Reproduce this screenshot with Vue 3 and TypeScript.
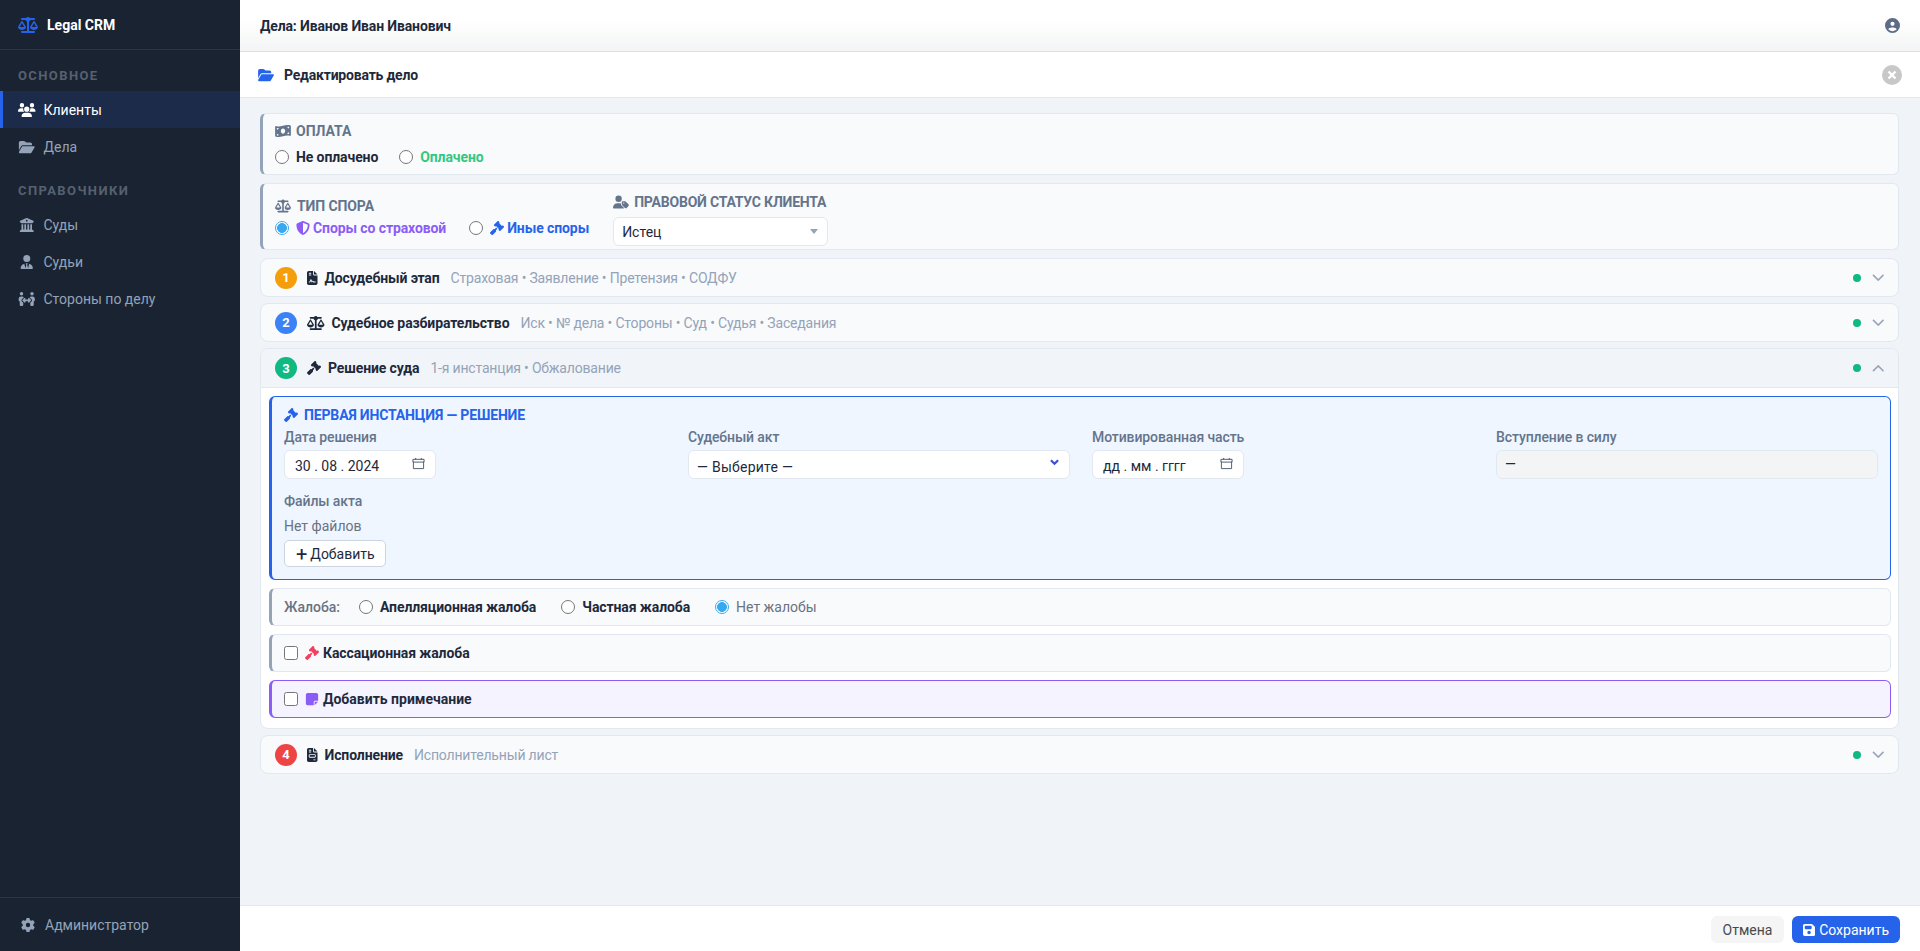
<template>
  <div class="app">
    <aside class="sidebar">
      <div class="brand">
        <svg class="brand-icon" viewBox="0 0 640 512"><path :d="icons.scale" /></svg>
        <span>Legal CRM</span>
      </div>
      <div class="nav-title">ОСНОВНОЕ</div>
      <a class="nav-item active">
        <svg viewBox="0 0 640 512"><path :d="icons.users" /></svg>Клиенты
      </a>
      <a class="nav-item">
        <svg viewBox="0 0 576 512"><path :d="icons.folder" /></svg>Дела
      </a>
      <div class="nav-title">СПРАВОЧНИКИ</div>
      <a class="nav-item">
        <svg viewBox="0 0 512 512"><path :d="icons.landmark" /></svg>Суды
      </a>
      <a class="nav-item">
        <svg viewBox="0 0 448 512"><path :d="icons.userTie" /></svg>Судьи
      </a>
      <a class="nav-item">
        <svg viewBox="0 0 640 512"><path :d="icons.peopleArrows" /></svg>Стороны по делу
      </a>
      <div class="side-foot">
        <svg viewBox="0 0 512 512"><path :d="icons.gear" /></svg>Администратор
      </div>
    </aside>

    <main class="main">
      <header class="topbar">
        <span>Дела: Иванов Иван Иванович</span>
        <svg class="user-icon" viewBox="0 0 512 512"><path :d="icons.circleUser" /></svg>
      </header>

      <div class="modal-head">
        <svg class="modal-icon" viewBox="0 0 576 512"><path :d="icons.folder" /></svg>
        <span class="modal-title">Редактировать дело</span>
        <button class="close-btn" type="button">
          <svg viewBox="0 0 12 12"><path d="M2.5 2.5l7 7M9.5 2.5l-7 7" /></svg>
        </button>
      </div>

      <div class="content">
        <section class="box">
          <div class="box-title">
            <svg viewBox="0 0 576 512"><path :d="icons.money" /></svg>ОПЛАТА
          </div>
          <div class="radios">
            <label class="radio"><input type="radio" name="pay" /><b>Не оплачено</b></label>
            <label class="radio"><input type="radio" name="pay" /><b class="green">Оплачено</b></label>
          </div>
        </section>

        <section class="box dispute">
          <div class="kind">
            <div class="box-title">
              <svg viewBox="0 0 640 512"><path :d="icons.scale" /></svg>ТИП СПОРА
            </div>
            <div class="radios">
              <label class="radio">
                <input type="radio" name="kind" checked />
                <b class="purple"><svg viewBox="0 0 512 512"><path :d="icons.shield" /></svg>Споры со страховой</b>
              </label>
              <label class="radio">
                <input type="radio" name="kind" />
                <b class="blue"><svg viewBox="0 0 512 512"><path :d="icons.gavel" /></svg>Иные споры</b>
              </label>
            </div>
          </div>
          <div class="status">
            <div class="box-title">
              <svg viewBox="0 0 640 512"><path :d="icons.userTag" /></svg>ПРАВОВОЙ СТАТУС КЛИЕНТА
            </div>
            <div class="select-wrap status-select">
              <select>
                <option>Истец</option>
              </select>
              <i class="caret"></i>
            </div>
          </div>
        </section>

        <div class="stages">
          <section v-for="stage in stages" :key="stage.num" class="stage" :class="{ open: stage.open }">
            <div class="stage-head">
              <span class="num" :style="{ background: stage.color }">{{ stage.num }}</span>
              <svg class="stage-icon" :viewBox="stage.box"><path :d="stage.icon" /></svg>
              <b class="stage-name">{{ stage.name }}</b>
              <span class="stage-sub">{{ stage.sub }}</span>
              <span class="dot"></span>
              <svg class="chevron" viewBox="0 0 14 8"><path :d="stage.open ? 'M1 7l6-6 6 6' : 'M1 1l6 6 6-6'" /></svg>
            </div>

            <div v-if="stage.open" class="stage-body">
              <div class="first">
                <div class="first-title">
                  <svg viewBox="0 0 512 512"><path :d="icons.gavel" /></svg>ПЕРВАЯ ИНСТАНЦИЯ — РЕШЕНИЕ
                </div>
                <div class="fields">
                  <div class="field">
                    <label>Дата решения</label>
                    <div class="date">
                      <span class="date-value">30 . 08 . 2024</span>
                      <svg viewBox="0 0 14 14"><path :d="calendar" /></svg>
                    </div>
                  </div>
                  <div class="field">
                    <label>Судебный акт</label>
                    <div class="select-wrap act-select">
                      <select>
                        <option>— Выберите —</option>
                      </select>
                      <svg class="act-arrow" viewBox="0 0 10 8"><path d="M1 2l4 4 4-4" /></svg>
                    </div>
                  </div>
                  <div class="field">
                    <label>Мотивированная часть</label>
                    <div class="date">
                      <span class="date-value">дд . мм . гггг</span>
                      <svg viewBox="0 0 14 14"><path :d="calendar" /></svg>
                    </div>
                  </div>
                  <div class="field">
                    <label>Вступление в силу</label>
                    <div class="readonly">—</div>
                  </div>
                </div>
                <div class="files">
                  <label>Файлы акта</label>
                  <div class="no-files">Нет файлов</div>
                  <button class="add-btn" type="button"><span class="plus">+</span>Добавить</button>
                </div>
              </div>

              <div class="row complaint">
                <span class="complaint-label">Жалоба:</span>
                <label class="radio"><input type="radio" name="complaint" /><b>Апелляционная жалоба</b></label>
                <label class="radio"><input type="radio" name="complaint" /><b>Частная жалоба</b></label>
                <label class="radio"><input type="radio" name="complaint" checked /><span class="muted">Нет жалобы</span></label>
              </div>

              <label class="row">
                <input type="checkbox" />
                <svg class="row-icon pink" viewBox="0 0 512 512"><path :d="icons.gavel" /></svg>
                <b>Кассационная жалоба</b>
              </label>

              <label class="row note">
                <input type="checkbox" />
                <svg class="row-icon violet" viewBox="0 0 448 512"><path :d="icons.note" /></svg>
                <b>Добавить примечание</b>
              </label>
            </div>
          </section>
        </div>
      </div>

      <footer class="footer">
        <button class="cancel" type="button">Отмена</button>
        <button class="save" type="button">
          <svg viewBox="0 0 448 512"><path :d="icons.floppy" /></svg>Сохранить
        </button>
      </footer>
    </main>
  </div>
</template>

<script setup lang="ts">
interface Stage {
  num: number;
  name: string;
  sub: string;
  color: string;
  icon: string;
  box: string;
  open: boolean;
}

const calendar = 'M1 2.5h12v3H1zM1.5 5v7.5h11V5M4 1v2M10 1v2';

const icons = {
  scale: 'M384 32H512c17.7 0 32 14.3 32 32s-14.3 32-32 32H398.4c-5.2 25.8-22.9 47.1-46.4 57.3V448H512c17.7 0 32 14.3 32 32s-14.3 32-32 32H320 128c-17.7 0-32-14.3-32-32s14.3-32 32-32H288V153.3c-23.5-10.3-41.2-31.6-46.4-57.3H128c-17.7 0-32-14.3-32-32s14.3-32 32-32H256c14.6-19.4 37.8-32 64-32s49.4 12.6 64 32zm55.6 288H584.4L512 195.8 439.6 320zM512 416c-62.9 0-115.2-34-126-78.9c-2.6-11 1-22.3 6.7-32.1l95.2-163.2c5-8.6 14.2-13.8 24.1-13.8s19.1 5.3 24.1 13.8l95.2 163.2c5.7 9.8 9.3 21.1 6.7 32.1C627.2 382 574.9 416 512 416zM126.8 195.8L54.4 320H199.3L126.8 195.8zM.9 337.1c-2.6-11 1-22.3 6.7-32.1l95.2-163.2c5-8.6 14.2-13.8 24.1-13.8s19.1 5.3 24.1 13.8l95.2 163.2c5.7 9.8 9.3 21.1 6.7 32.1C242 382 189.7 416 126.8 416S11.7 382 .9 337.1z',
  users: 'M144 0a80 80 0 1 1 0 160A80 80 0 1 1 144 0zM512 0a80 80 0 1 1 0 160A80 80 0 1 1 512 0zM0 298.7C0 239.8 47.8 192 106.7 192h42.7c15.9 0 31 3.5 44.6 9.7c-1.3 7.2-1.9 14.7-1.9 22.3c0 38.2 16.8 72.5 43.3 96c-.2 0-.4 0-.7 0H21.3C9.6 320 0 310.4 0 298.7zM405.3 320c-.2 0-.4 0-.7 0c26.6-23.5 43.3-57.8 43.3-96c0-7.6-.7-15-1.9-22.3c13.6-6.3 28.7-9.7 44.6-9.7h42.7C592.2 192 640 239.8 640 298.7c0 11.8-9.6 21.3-21.3 21.3H405.3zM224 224a96 96 0 1 1 192 0 96 96 0 1 1 -192 0zM128 485.3C128 411.7 187.7 352 261.3 352H378.7C452.3 352 512 411.7 512 485.3c0 14.7-11.9 26.7-26.7 26.7H154.7c-14.7 0-26.7-11.9-26.7-26.7z',
  folder: 'M88.7 223.8L0 375.8V96C0 60.7 28.7 32 64 32H181.5c17 0 33.3 6.7 45.3 18.7l26.5 26.5c12 12 28.3 18.7 45.3 18.7H416c35.3 0 64 28.7 64 64v32H144c-22.8 0-43.8 12.1-55.3 31.8zm27.6 16.1C122.1 230 132.6 224 144 224H544c11.5 0 22 6.1 27.7 16.1s5.7 22.2-.1 32.1l-112 192C453.9 474 443.4 480 432 480H32c-11.5 0-22-6.1-27.7-16.1s-5.7-22.2 .1-32.1l112-192z',
  landmark: 'M243.4 2.6l-224 96c-14 6-21.8 21-18.7 35.8S16.8 160 32 160v8c0 13.3 10.7 24 24 24H456c13.3 0 24-10.7 24-24v-8c15.2 0 28.3-10.7 31.3-25.6s-4.8-29.9-18.7-35.8l-224-96c-8-3.4-17.2-3.4-25.2 0zM128 224H64V420.3c-.6 .3-1.2 .7-1.8 1.1l-48 32c-11.7 7.8-17 22.4-12.9 35.9S17.9 512 32 512H480c14.1 0 26.5-9.2 30.6-22.7s-1.1-28.1-12.9-35.9l-48-32c-.6-.4-1.2-.7-1.8-1.1V224H384V416H344V224H280V416H232V224H168V416H128V224zM256 64a32 32 0 1 1 0 64 32 32 0 1 1 0-64z',
  userTie: 'M96 128a128 128 0 1 0 256 0A128 128 0 1 0 96 128zm94.5 200.2l18.6 31L175.8 483.1l-36-146.9c-2-8.1-9.8-13.4-17.9-11.3C51.9 342.4 0 405.8 0 481.3c0 17 13.8 30.7 30.7 30.7H162.5c0 0 0 0 .1 0H168 280h5.5c0 0 0 0 .1 0H417.3c17 0 30.7-13.8 30.7-30.7c0-75.5-51.9-138.9-121.9-156.4c-8.1-2-15.9 3.3-17.9 11.3l-36 146.9L238.9 359.2l18.6-31c6.4-10.7-1.3-24.2-13.7-24.2H224 204.3c-12.4 0-20.1 13.6-13.7 24.2z',
  peopleArrows: 'M64 64a64 64 0 1 1 128 0A64 64 0 1 1 64 64zM25.9 233.4C29.3 191.9 64 160 105.6 160h44.8c27 0 51 13.4 65.5 34.1c-2.7 1.9-5.2 4-7.5 6.3l-64 64c-21.9 21.9-21.9 57.3 0 79.2L192 391.2V464c0 26.5-21.5 48-48 48H112c-26.5 0-48-21.5-48-48V348.3c-26.5-9.5-44.7-35.8-42.2-65.6l4.1-49.3zM448 64a64 64 0 1 1 128 0A64 64 0 1 1 448 64zM431.6 200.4c-2.3-2.3-4.9-4.4-7.5-6.3c14.5-20.7 38.6-34.1 65.5-34.1h44.8c41.6 0 76.3 31.9 79.7 73.4l4.1 49.3c2.5 29.8-15.7 56.1-42.2 65.6V464c0 26.5-21.5 48-48 48H496c-26.5 0-48-21.5-48-48V391.2l47.6-47.6c21.9-21.9 21.9-57.3 0-79.2l-64-64zM272 240v32h96V240c0-9.7 5.8-18.5 14.8-22.2s19.3-1.7 26.2 5.2l64 64c9.4 9.4 9.4 24.6 0 33.9l-64 64c-6.9 6.9-17.2 8.9-26.2 5.2s-14.8-12.5-14.8-22.2V336H272v32c0 9.7-5.8 18.5-14.8 22.2s-19.3 1.7-26.2-5.2l-64-64c-9.4-9.4-9.4-24.6 0-33.9l64-64c6.9-6.9 17.2-8.9 26.2-5.2s14.8 12.5 14.8 22.2z',
  gear: 'M495.9 166.6c3.2 8.7 .5 18.4-6.4 24.6l-43.3 39.4c1.1 8.3 1.7 16.8 1.7 25.4s-.6 17.1-1.7 25.4l43.3 39.4c6.9 6.2 9.6 15.9 6.4 24.6c-4.4 11.9-9.7 23.3-15.8 34.3l-4.7 8.1c-6.6 11-14 21.4-22.1 31.2c-5.9 7.2-15.7 9.6-24.5 6.8l-55.7-17.7c-13.4 10.3-28.2 18.9-44 25.4l-12.5 57.1c-2 9.1-9 16.3-18.2 17.8c-13.8 2.3-28 3.5-42.5 3.5s-28.7-1.2-42.5-3.5c-9.2-1.5-16.2-8.7-18.2-17.8l-12.5-57.1c-15.8-6.5-30.6-15.1-44-25.4L83.1 425.9c-8.8 2.8-18.6 .3-24.5-6.8c-8.1-9.8-15.5-20.2-22.1-31.2l-4.7-8.1c-6.1-11-11.4-22.4-15.8-34.3c-3.2-8.7-.5-18.4 6.4-24.6l43.3-39.4C64.6 273.1 64 264.6 64 256s.6-17.1 1.7-25.4L22.4 191.2c-6.9-6.2-9.6-15.9-6.4-24.6c4.4-11.9 9.7-23.3 15.8-34.3l4.7-8.1c6.6-11 14-21.4 22.1-31.2c5.9-7.2 15.7-9.6 24.5-6.8l55.7 17.7c13.4-10.3 28.2-18.9 44-25.4l12.5-57.1c2-9.1 9-16.3 18.2-17.8C227.3 1.2 241.5 0 256 0s28.7 1.2 42.5 3.5c9.2 1.5 16.2 8.7 18.2 17.8l12.5 57.1c15.8 6.5 30.6 15.1 44 25.4l55.7-17.7c8.8-2.8 18.6-.3 24.5 6.8c8.1 9.8 15.5 20.2 22.1 31.2l4.7 8.1c6.1 11 11.4 22.4 15.8 34.3zM256 336a80 80 0 1 0 0-160 80 80 0 1 0 0 160z',
  circleUser: 'M399 384.2C376.9 345.8 335.4 320 288 320H224c-47.4 0-88.9 25.8-111 64.2c35.2 39.2 86.2 63.8 143 63.8s107.8-24.7 143-63.8zM0 256a256 256 0 1 1 512 0A256 256 0 1 1 0 256zm256 16a72 72 0 1 0 0-144 72 72 0 1 0 0 144z',
  money: 'M0 112.5V422.3c0 18 10.1 35 27 41.3c87 32.5 174 10.3 261-11.9c79.8-20.3 159.6-40.7 239.3-18.9c23 6.3 48.7-9.5 48.7-33.4V89.7c0-18-10.1-35-27-41.3C462 15.9 375 38.1 288 60.3C208.2 80.6 128.4 100.9 48.7 79.1C25.6 72.8 0 88.6 0 112.5zM288 352c-44.2 0-80-43-80-96s35.8-96 80-96s80 43 80 96s-35.8 96-80 96zM64 352c35.3 0 64 28.7 64 64H64V352zm64-208c0 35.3-28.7 64-64 64V144h64zM512 304v64H448c0-35.3 28.7-64 64-64zM448 96h64v64c-35.3 0-64-28.7-64-64z',
  gavel: 'M318.6 9.4c-12.5-12.5-32.8-12.5-45.3 0l-120 120c-12.5 12.5-12.5 32.8 0 45.3l16 16c12.5 12.5 32.8 12.5 45.3 0l4-4L325.4 293.4l-4 4c-12.5 12.5-12.5 32.8 0 45.3l16 16c12.5 12.5 32.8 12.5 45.3 0l120-120c12.5-12.5 12.5-32.8 0-45.3l-16-16c-12.5-12.5-32.8-12.5-45.3 0l-4 4L330.6 74.6l4-4c12.5-12.5 12.5-32.8 0-45.3l-16-16zm-152 288c-12.5-12.5-32.8-12.5-45.3 0l-112 112c-12.5 12.5-12.5 32.8 0 45.3l48 48c12.5 12.5 32.8 12.5 45.3 0l112-112c12.5-12.5 12.5-32.8 0-45.3l-1.4-1.4L272 285.3 226.7 240 168 298.7l-1.4-1.4z',
  shield: 'M256 0c4.6 0 9.2 1 13.4 2.9L457.7 82.8c22 9.3 38.4 31 38.3 57.2c-.5 99.2-41.3 280.7-213.6 363.2c-16.7 8-36.1 8-52.8 0C57.3 420.7 16.5 239.2 16 140c-.1-26.2 16.3-47.9 38.3-57.2L242.7 2.9C246.8 1 251.4 0 256 0zm0 66.8V444.8C394 378 431.1 230.1 432 141.4L256 66.8l0 0z',
  userTag: 'M224 256A128 128 0 1 0 224 0a128 128 0 1 0 0 256zm-45.7 48C79.8 304 0 383.8 0 482.3C0 498.7 13.3 512 29.7 512H418.3c10 0 18.8-4.9 24.2-12.5l-99.2-99.2c-14.9-14.9-23.3-35.1-23.3-56.1v-33c-15.9-4.7-32.8-7.2-50.3-7.2H178.3zM384 224c-17.7 0-32 14.3-32 32v82.7c0 17 6.7 33.3 18.7 45.3L478.1 491.3c18.7 18.7 49.1 18.7 67.9 0l73.4-73.4c18.7-18.7 18.7-49.1 0-67.9L512 242.7c-12-12-28.3-18.7-45.3-18.7H384zm24 80a24 24 0 1 1 48 0 24 24 0 1 1 -48 0z',
  fileContract: 'M64 0C28.7 0 0 28.7 0 64V448c0 35.3 28.7 64 64 64H320c35.3 0 64-28.7 64-64V160H256c-17.7 0-32-14.3-32-32V0H64zM256 0V128H384L256 0zM80 64h64c8.8 0 16 7.2 16 16s-7.2 16-16 16H80c-8.8 0-16-7.2-16-16s7.2-16 16-16zm0 64h64c8.8 0 16 7.2 16 16s-7.2 16-16 16H80c-8.8 0-16-7.2-16-16s7.2-16 16-16zm54.2 253.8c-6.1 20.3-24.8 34.2-46 34.2H80c-8.8 0-16-7.2-16-16s7.2-16 16-16h8.2c7.1 0 13.3-4.6 15.3-11.4l14.9-49.5c3.4-11.3 13.8-19.1 25.6-19.1s22.2 7.7 25.6 19.1l11.6 38.6c7.4-6.2 16.8-9.7 26.8-9.7c15.9 0 30.4 9 37.5 23.2l4.4 8.8H304c8.8 0 16 7.2 16 16s-7.2 16-16 16H240c-6.1 0-11.6-3.4-14.3-8.8l-8.8-17.7c-1.7-3.4-5.1-5.5-8.8-5.5s-7.2 2.1-8.8 5.5l-8.8 17.7c-2.9 5.9-9.2 9.4-15.7 8.8s-12.1-5.1-13.9-11.3L144 349l-9.8 32.8z',
  fileInvoice: 'M64 0C28.7 0 0 28.7 0 64V448c0 35.3 28.7 64 64 64H320c35.3 0 64-28.7 64-64V160H256c-17.7 0-32-14.3-32-32V0H64zM256 0V128H384L256 0zM80 64h64c8.8 0 16 7.2 16 16s-7.2 16-16 16H80c-8.8 0-16-7.2-16-16s7.2-16 16-16zm0 64h64c8.8 0 16 7.2 16 16s-7.2 16-16 16H80c-8.8 0-16-7.2-16-16s7.2-16 16-16zm16 96H288c17.7 0 32 14.3 32 32v64c0 17.7-14.3 32-32 32H96c-17.7 0-32-14.3-32-32V256c0-17.7 14.3-32 32-32zm0 32v64H288V256H96zM240 416h64c8.8 0 16 7.2 16 16s-7.2 16-16 16H240c-8.8 0-16-7.2-16-16s7.2-16 16-16z',
  note: 'M64 32C28.7 32 0 60.7 0 96V416c0 35.3 28.7 64 64 64H288V368c0-26.5 21.5-48 48-48H448V96c0-35.3-28.7-64-64-64H64zM448 352H402.7 336c-8.8 0-16 7.2-16 16v66.7V480l32-32 64-64 32-32z',
  floppy: 'M64 32C28.7 32 0 60.7 0 96V416c0 35.3 28.7 64 64 64H384c35.3 0 64-28.7 64-64V173.3c0-17-6.7-33.3-18.7-45.3L352 50.7C340 38.7 323.7 32 306.7 32H64zm0 96c0-17.7 14.3-32 32-32H288c17.7 0 32 14.3 32 32v64c0 17.7-14.3 32-32 32H96c-17.7 0-32-14.3-32-32V128zM224 288a64 64 0 1 1 0 128 64 64 0 1 1 0-128z',
};

const stages: Stage[] = [
  { num: 1, name: 'Досудебный этап', sub: 'Страховая • Заявление • Претензия • СОДФУ', color: '#f59e0b', icon: icons.fileContract, box: '0 0 384 512', open: false },
  { num: 2, name: 'Судебное разбирательство', sub: 'Иск • № дела • Стороны • Суд • Судья • Заседания', color: '#3b82f6', icon: icons.scale, box: '0 0 640 512', open: false },
  { num: 3, name: 'Решение суда', sub: '1-я инстанция • Обжалование', color: '#10b981', icon: icons.gavel, box: '0 0 512 512', open: true },
  { num: 4, name: 'Исполнение', sub: 'Исполнительный лист', color: '#ef4444', icon: icons.fileInvoice, box: '0 0 384 512', open: false },
];
</script>

<style>
html, body {
  margin: 0;
  height: 100%;
}
</style>

<style scoped>
.app, .app * {
  box-sizing: border-box;
}

.app {
  display: flex;
  height: 951px;
  font-family: Roboto, "Noto Sans", sans-serif;
  font-size: 14px;
  color: #1e293b;
  overflow: hidden;
}

.sidebar {
  width: 240px;
  flex-shrink: 0;
  background: #1a2332;
  color: #94a3b8;
  display: flex;
  flex-direction: column;
}

.brand {
  height: 50px;
  border-bottom: 1px solid #2a3545;
  display: flex;
  align-items: center;
  gap: 9px;
  padding-left: 18px;
  font-size: 14px;
  font-weight: 700;
  color: #fff;
}

.brand-icon {
  width: 20px;
  height: 16px;
  fill: #2563eb;
}

.nav-title {
  margin: 14px 0 3px;
  padding-left: 18px;
  height: 24px;
  font-size: 13px;
  font-weight: 700;
  letter-spacing: 1.4px;
  color: #566170;
  line-height: 24px;
}

.nav-item {
  display: flex;
  align-items: center;
  height: 37px;
  padding-left: 18px;
  font-size: 14px;
  color: #94a3b8;
}

.nav-item svg {
  width: 17.5px;
  height: 14px;
  margin-right: 8px;
  fill: currentColor;
}

.nav-item.active {
  background: #1c2b4a;
  color: #fff;
  box-shadow: inset 3px 0 0 #2563eb;
}

.side-foot {
  margin-top: auto;
  height: 54px;
  border-top: 1px solid #2a3545;
  display: flex;
  align-items: center;
  padding-left: 21px;
  font-size: 14px;
  color: #94a3b8;
}

.side-foot svg {
  width: 14px;
  height: 14px;
  margin-right: 10px;
  fill: currentColor;
}

.main {
  flex: 1;
  min-width: 0;
  display: flex;
  flex-direction: column;
  background: #f0f4f9;
}

.topbar {
  height: 52px;
  flex-shrink: 0;
  display: flex;
  align-items: center;
  justify-content: space-between;
  padding: 0 20px;
  background: linear-gradient(#fff 40%, #f3f4f5);
  border-bottom: 1px solid #dcdfe3;
  font-weight: 700;
  font-size: 14px;
  letter-spacing: -0.14px;
}

.user-icon {
  width: 15px;
  height: 15px;
  fill: #5d6d88;
}

.modal-head {
  height: 46px;
  flex-shrink: 0;
  display: flex;
  align-items: center;
  padding: 0 18px;
  background: #fff;
  border-bottom: 1px solid #e2e8f0;
}

.modal-icon {
  width: 16px;
  height: 14px;
  fill: #2563eb;
  margin-right: 10px;
}

.modal-title {
  font-weight: 700;
  font-size: 14px;
  letter-spacing: -0.2px;
}

.close-btn {
  margin-left: auto;
  width: 20px;
  height: 20px;
  border: 0;
  border-radius: 50%;
  background: #c8c8c8;
  padding: 4px;
  display: flex;
}

.close-btn svg {
  width: 12px;
  height: 12px;
  stroke: #fff;
  stroke-width: 2.4;
  fill: none;
}

.content {
  flex: 1;
  padding: 15px 21px 0 20px;
  display: flex;
  flex-direction: column;
  gap: 8px;
  min-height: 0;
}

.box {
  background: #f8fafc;
  border: 1px solid #e2e8f0;
  border-left: 3px solid #94a3b8;
  border-radius: 6px;
  padding: 7px 12px;
}

.dispute {
  display: flex;
  gap: 24px;
  padding-top: 8px;
  padding-bottom: 3px;
}

.box-title {
  display: flex;
  align-items: center;
  font-size: 14px;
  font-weight: 700;
  color: #64748b;
  height: 20px;
}

.box-title svg {
  width: 16px;
  height: 14px;
  margin-right: 5px;
  fill: currentColor;
}

.kind {
  padding-top: 4px;
}

.kind .box-title {
  letter-spacing: -0.1px;
}

.kind .box-title svg {
  margin-right: 6px;
}

.status .box-title {
  letter-spacing: -0.2px;
}

.radios {
  display: flex;
  gap: 21px;
  margin-top: 6px;
}

.kind .radios {
  gap: 23px;
  margin-top: 2px;
}

.radio {
  display: inline-flex;
  align-items: center;
  gap: 7px;
  height: 20px;
  font-size: 14px;
}

.radio input {
  appearance: none;
  width: 14px;
  height: 14px;
  margin: 0;
  border: 1px solid #767676;
  border-radius: 50%;
  background: #fff;
}

.radio input:checked {
  border-color: #38a9f0;
  background: radial-gradient(circle, #38a9f0 0 4.6px, #fff 5.2px);
}

.radio b {
  display: inline-flex;
  align-items: center;
  letter-spacing: -0.1px;
}

.radio b svg {
  width: 14px;
  height: 14px;
  margin-right: 3px;
  fill: currentColor;
}

.green { color: #34c77f; }
.purple { color: #8b5cf6; }
.blue { color: #2563eb; }
.muted { color: #6b7280; }

.status-select {
  width: 215px;
  margin-top: 5px;
}

.select-wrap {
  position: relative;
  height: 29px;
}

.select-wrap select {
  width: 100%;
  height: 100%;
  appearance: none;
  background: #fff;
  border: 1px solid #e2e8f0;
  border-radius: 6px;
  padding: 0 8px;
  font: inherit;
  color: #1e293b;
}

.caret {
  position: absolute;
  right: 10px;
  top: 12px;
  border-left: 4px solid transparent;
  border-right: 4px solid transparent;
  border-top: 5px solid #94a3b8;
}

.stages {
  display: flex;
  flex-direction: column;
  gap: 6px;
}

.stage {
  background: #f8fafc;
  border: 1px solid #e2e8f0;
  border-radius: 8px;
  overflow: hidden;
}

.stage.open {
  background: #fff;
}

.stage-head {
  height: 37px;
  display: flex;
  align-items: center;
  padding: 0 14px;
}

.open .stage-head {
  height: 39px;
  background: #f1f5f9;
  border-bottom: 1px solid #e2e8f0;
}

.num {
  width: 22px;
  height: 22px;
  border-radius: 50%;
  color: #fff;
  font-size: 13px;
  font-weight: 700;
  display: flex;
  align-items: center;
  justify-content: center;
  margin-right: 10px;
}

.stage-icon {
  height: 14px;
  width: auto;
  fill: #1e293b;
  margin-right: 7px;
}

.stage-name {
  font-size: 14px;
  letter-spacing: -0.12px;
  margin-right: 11px;
}

.stage-sub {
  font-size: 14px;
  letter-spacing: -0.18px;
  color: #94a3b8;
}

.dot {
  margin-left: auto;
  width: 8px;
  height: 8px;
  border-radius: 50%;
  background: #10b981;
}

.chevron {
  width: 12.5px;
  height: 7px;
  margin-left: 11px;
  stroke: #9aa5b8;
  stroke-width: 1.8;
  fill: none;
}

.stage-body {
  padding: 8px 7px 10px 8px;
  display: flex;
  flex-direction: column;
  gap: 8px;
}

.first {
  background: #eff6ff;
  border: 1px solid #2563eb;
  border-left: 3px solid #2563eb;
  border-radius: 6px;
  padding: 8px 12px 12px;
}

.first-title {
  display: flex;
  align-items: center;
  font-size: 14px;
  font-weight: 700;
  letter-spacing: -0.15px;
  color: #2563eb;
  height: 20px;
}

.first-title svg {
  width: 14px;
  height: 14px;
  margin-right: 6px;
  fill: currentColor;
}

.fields {
  display: grid;
  grid-template-columns: repeat(4, 1fr);
  column-gap: 22px;
  margin-top: 2px;
}

.field label, .files label {
  display: block;
  font-size: 14px;
  font-weight: 500;
  letter-spacing: -0.1px;
  color: #64748b;
  height: 20px;
  line-height: 20px;
  margin-bottom: 3px;
}

.date {
  width: 152px;
  height: 29px;
  background: #fff;
  border: 1px solid #e2e8f0;
  border-radius: 6px;
  display: flex;
  align-items: center;
  justify-content: space-between;
  padding: 0 10px;
}

.date svg {
  width: 13px;
  height: 13px;
  margin-top: -3px;
  stroke: #475569;
  fill: none;
  stroke-width: 1;
}

.date-value {
  font-size: 14px;
  padding-top: 2px;
}

.act-select select {
  padding-top: 4px;
  letter-spacing: 0.25px;
}

.act-arrow {
  position: absolute;
  right: 11px;
  top: 8px;
  width: 9px;
  height: 8px;
  stroke: #3b4fd8;
  stroke-width: 2.4;
  fill: none;
}

.readonly {
  height: 29px;
  background: #f3f4f6;
  border: 1px solid #e2e8f0;
  border-radius: 6px;
  padding: 0 8px;
  line-height: 27px;
  color: #1e293b;
}

.files {
  margin-top: 12px;
}

.files label {
  margin-bottom: 2px;
}

.no-files {
  height: 24px;
  line-height: 26px;
  color: #6b7280;
  font-size: 14px;
}

.add-btn {
  margin-top: 3px;
  height: 27px;
  width: 102px;
  padding: 0 11px;
  display: inline-flex;
  align-items: center;
  gap: 3px;
  background: #fff;
  border: 1px solid #cbd5e1;
  border-radius: 5px;
  font: inherit;
  color: #1e293b;
}

.plus {
  font-size: 20px;
  line-height: 1;
}

.row {
  display: flex;
  align-items: center;
  height: 38px;
  background: #f8fafc;
  border: 1px solid #e2e8f0;
  border-left: 3px solid #94a3b8;
  border-radius: 6px;
  padding: 0 12px;
}

.row > b {
  letter-spacing: -0.1px;
}

.row.note {
  background: #f5f3ff;
  border: 1px solid #8b5cf6;
  border-left: 3px solid #8b5cf6;
}

.row.note > b {
  letter-spacing: 0;
}

.row input[type="checkbox"] {
  width: 14px;
  height: 14px;
  margin: 0 7px 0 0;
}

.row-icon {
  width: 14px;
  height: 14px;
  margin-right: 4px;
  fill: currentColor;
}

.pink { color: #f43f5e; }
.violet { color: #8b5cf6; }

.complaint {
  gap: 25px;
}

.complaint-label {
  color: #6b7280;
  font-weight: 500;
  margin-right: -6px;
}

.footer {
  height: 46px;
  flex-shrink: 0;
  background: #fff;
  border-top: 1px solid #e2e8f0;
  display: flex;
  align-items: flex-start;
  justify-content: flex-end;
  gap: 8px;
  padding: 10px 20px 0;
}

.cancel {
  height: 27px;
  width: 73px;
  padding: 0;
  background: #f5f5f5;
  border: 0;
  border-radius: 6px;
  font: inherit;
  color: #4a4a4a;
}

.save {
  height: 27px;
  width: 108px;
  padding: 0 11px;
  background: #2563eb;
  border: 0;
  border-radius: 6px;
  font: inherit;
  color: #fff;
  display: inline-flex;
  align-items: center;
}

.save svg {
  width: 13px;
  height: 14px;
  margin-right: 4px;
  fill: #fff;
}
</style>
